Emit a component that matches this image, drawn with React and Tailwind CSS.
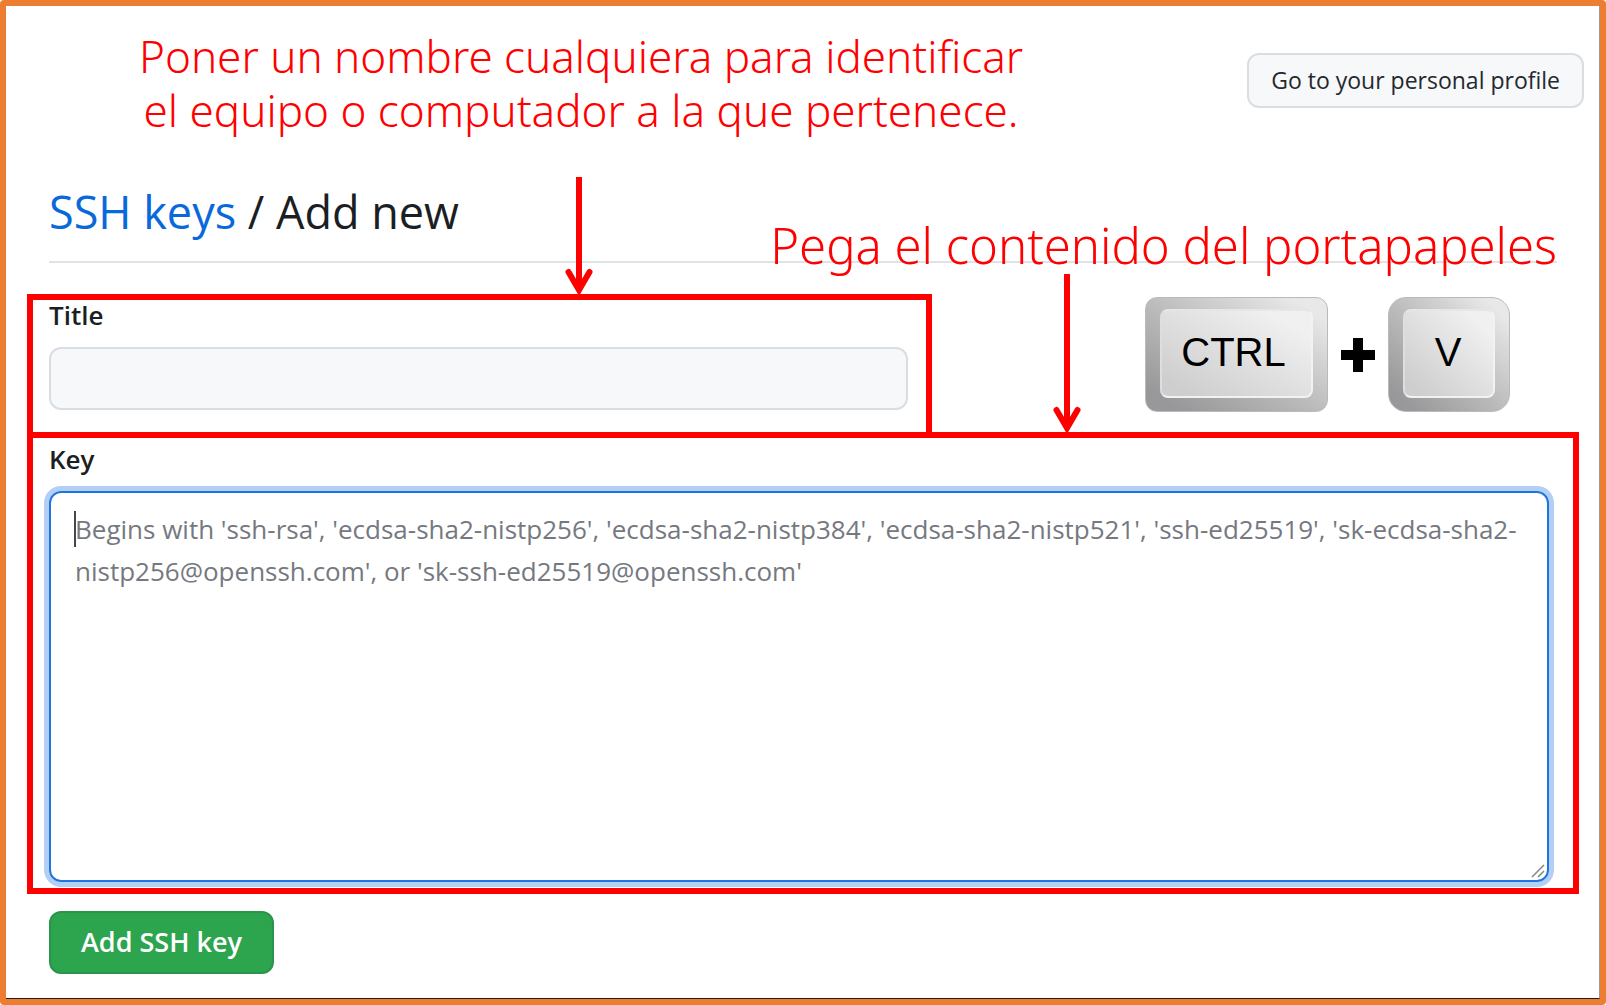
function Arrow({ length, className }) {
  const tip = length - 2;
  return (
    <svg
      aria-hidden="true"
      width="28"
      height={length}
      viewBox={`0 0 28 ${length}`}
      fill="none"
      stroke="#ff0000"
      strokeWidth="6"
      className={className}
    >
      <path d={`M14 0V${tip - 6}`} />
      <path d={`M3.5 ${tip - 22}L14 ${tip - 4}L24.5 ${tip - 22}`} strokeLinecap="round" />
      <path d={`M9 ${tip - 13}H19L14 ${tip - 4}Z`} fill="#ff0000" strokeWidth="2" />
    </svg>
  );
}

function Keycap({ children, outer, inner }) {
  return (
    <kbd
      className={`h-[115px] border border-[#b9bbbb] bg-linear-to-tr from-[#98989a] from-10% via-[#bdbdbd] via-50% to-[#e8e8e8] to-90% px-[14px] pt-[11px] font-['Liberation_Sans',sans-serif] text-[40px] leading-[69px] text-black ${outer}`}
    >
      <span
        className={`flex h-[89px] justify-center rounded-lg border-2 border-t-[#e6e6e6] border-r-[#f2f2f2] border-b-[#f2f2f2] border-l-[#dedede] bg-linear-to-tr from-[#cecece] from-10% to-[#f0f0f0] to-85% pt-[7px] ${inner}`}
      >
        {children}
      </span>
    </kbd>
  );
}

export default function App() {
  return (
    <div className="flex min-h-screen flex-col bg-white">
      <div className="flex grow flex-col rounded-sm border-6 border-[#ed7d31] font-['Open_Sans','Noto_Sans',sans-serif] text-[#1b1f24]">
        <main className="grow border-r border-b border-r-[#9a9a9a] border-b-[#1f1f1f] bg-white pb-6">
          <header className="flex items-start justify-between pt-[23px] pr-[15px] pl-[133px]">
            <p className="text-center font-['Noto_Sans',sans-serif] text-[44px] leading-[54px] font-[350] text-[#ff0000]">
              Poner un nombre cualquiera para identificar
              <br />
              el equipo o computador a la que pertenece.
            </p>
            <button
              type="button"
              className="mt-6 h-[55px] rounded-xl border-2 border-[#dbdde0] bg-[#f6f8fa] px-[22px] text-[23px] font-medium text-[#24292f]"
            >
              Go to your personal profile
            </button>
          </header>

          <section className="relative mt-[45px] mr-[42px] ml-[43px]">
            <h1 className="border-b-2 border-[#dfe3e8] pb-[19px] text-[45px] leading-[60px]">
              <a href="#keys" className="text-[#0969da]">
                SSH keys
              </a>{" "}
              / Add new
            </h1>
            <p className="absolute top-[33px] right-0 font-['Noto_Sans',sans-serif] text-[49px] leading-[60px] font-[350] whitespace-nowrap text-[#ff0000]">
              Pega el contenido del portapapeles
            </p>
          </section>

          <form className="mt-[31px] mr-5 ml-[21px]">
            <div className="grid grid-cols-[7fr_5fr]">
              <div className="relative border-6 border-b-0 border-[#ff0000] pr-[18px] pb-[22px] pl-4">
                <Arrow length={119} className="absolute bottom-full left-[532px] mb-1" />
                <label htmlFor="key-title" className="block text-[26px] leading-[30px] font-semibold">
                  Title
                </label>
                <input
                  id="key-title"
                  type="text"
                  className="mt-[17px] block h-[63px] w-full rounded-xl border-2 border-[#d8dee4] bg-[#f6f8fa] px-6 text-[26px] outline-none"
                />
              </div>
              <div className="flex items-start justify-end pt-[3px] pr-[69px]">
                <Keycap outer="w-[183px] rounded-xl" inner="pr-[6px]">
                  CTRL
                </Keycap>
                <svg
                  role="img"
                  aria-label="plus"
                  width="34"
                  height="34"
                  viewBox="0 0 34 34"
                  className="mx-[13px] mt-[41px]"
                >
                  <path d="M12 0h10v12h12v10H22v12H12V22H0V12h12z" fill="#000" />
                </svg>
                <Keycap outer="w-[122px] rounded-[18px]" inner="pr-[2px]">
                  V
                </Keycap>
              </div>
            </div>

            <div className="relative border-6 border-[#ff0000] pt-1.5 pr-6 pb-1.5 pl-4">
              <Arrow length={160} className="absolute bottom-full left-[1020px] mb-1" />
              <label htmlFor="key-value" className="block text-[26px] leading-[30px] font-semibold">
                Key
              </label>
              <div className="relative mt-[17px]">
                <textarea
                  id="key-value"
                  placeholder="Begins with 'ssh-rsa', 'ecdsa-sha2-nistp256', 'ecdsa-sha2-nistp384', 'ecdsa-sha2-nistp521', 'ssh-ed25519', 'sk-ecdsa-sha2-nistp256@openssh.com', or 'sk-ssh-ed25519@openssh.com'"
                  className="block h-[391px] w-full resize-none rounded-xl border-2 border-[#1f75e0] px-6 py-[15px] text-[26px] leading-[42px] ring-5 ring-[#b4cff5] outline-none placeholder:text-[#75797f]"
                />
                <span aria-hidden="true" className="absolute top-5 left-[25px] h-9 w-0.5 bg-[#44474b]" />
                <svg
                  aria-hidden="true"
                  width="14"
                  height="14"
                  viewBox="0 0 14 14"
                  fill="none"
                  stroke="#858585"
                  strokeWidth="1.5"
                  className="absolute right-1 bottom-1"
                >
                  <path d="M1 13L13 1M7 13L13 7" />
                </svg>
              </div>
            </div>

            <button
              type="submit"
              className="mt-[17px] ml-[22px] h-[63px] rounded-xl border-2 border-[#2a954a] bg-[#2da44e] px-[30px] text-[27px] font-semibold text-white"
            >
              Add SSH key
            </button>
          </form>
        </main>
      </div>
    </div>
  );
}
